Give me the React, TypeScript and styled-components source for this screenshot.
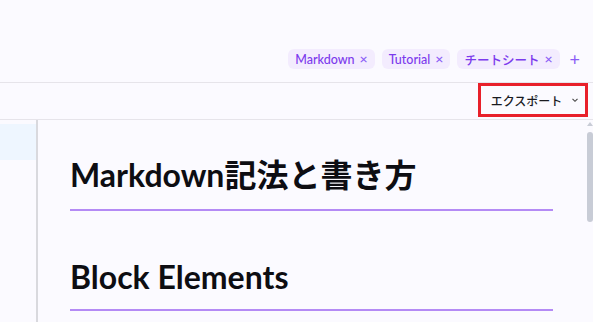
import styled, { createGlobalStyle } from "styled-components";

const GlobalStyle = createGlobalStyle`
  html, body {
    margin: 0;
    padding: 0;
    background: #fbfaff;
    font-family: Lato, "Noto Sans CJK JP", sans-serif;
    overflow: hidden;
  }
`;

const Page = styled.div`
  width: 593px;
  height: 322px;
  display: flex;
  flex-direction: column;
  background: #fbfaff;
`;

const Header = styled.div`
  height: 83px;
  border-bottom: 1px solid #e6e4ea;
  display: flex;
  align-items: flex-end;
  justify-content: flex-end;
  padding: 0 13px 13px 0;
  box-sizing: border-box;
  gap: 7px;
`;

const Tag = styled.span`
  display: inline-flex;
  align-items: center;
  gap: 5px;
  height: 20px;
  padding: 0 7px;
  border-radius: 6px;
  background: #f3ecfe;
  color: #7c3aed;
  font-size: 12.5px;
  font-weight: 500;
`;

const Close = styled.span`
  font-size: 14px;
  line-height: 14px;
  color: #8b5cf6;
`;

const Plus = styled.span`
  color: #8b5cf6;
  font-size: 18px;
  line-height: 20px;
  margin-left: 3px;
`;

const Toolbar = styled.div`
  height: 37px;
  border-bottom: 1px solid #e6e4ea;
  display: flex;
  justify-content: flex-end;
  align-items: flex-start;
  padding-right: 5px;
  box-sizing: border-box;
`;

const ExportButton = styled.button`
  height: 34px;
  width: 110px;
  border: 3px solid #e8202a;
  background: transparent;
  display: flex;
  align-items: center;
  justify-content: center;
  gap: 9px;
  font-family: Lato, "Noto Sans CJK JP", sans-serif;
  font-size: 12px;
  font-weight: 500;
  color: #1a1a1f;
  padding: 0 0 0 4px;
`;

const Body = styled.div`
  flex: 1;
  display: flex;
  min-height: 0;
`;

const Sidebar = styled.div`
  width: 36px;
  border-right: 2px solid #d9d9de;
  padding-top: 4px;
`;

const SideItem = styled.div`
  height: 36px;
  background: #eef6ff;
`;

const Content = styled.div`
  flex: 1;
  display: flex;
  min-width: 0;
`;

const Article = styled.div`
  flex: 1;
  padding: 0 34px 0 32px;
  overflow: hidden;
`;

const Heading = styled.h1`
  margin: 35px 0 0;
  padding-bottom: 14px;
  border-bottom: 2px solid #b48af5;
  font-size: 32px;
  font-weight: 700;
  line-height: 40px;
  color: #0d0d12;
  white-space: nowrap;
`;

const SubHeading = styled(Heading)`
  margin-top: 46px;
  padding-bottom: 12px;
`;

const Scrollbar = styled.div`
  width: 6px;
  display: flex;
  flex-direction: column;
  align-items: center;
  padding-top: 2px;
`;

const Arrow = styled.div`
  width: 0;
  height: 0;
  border-left: 3px solid transparent;
  border-right: 3px solid transparent;
  border-bottom: 4px solid #c8ccd6;
`;

const Thumb = styled.div`
  margin-top: 6px;
  width: 6px;
  height: 90px;
  border-radius: 3px;
  background: #c8ccd6;
`;

const Chevron = () => (
  <svg width="8" height="8" viewBox="0 0 8 8">
    <path d="M1.5 2.8 L4 5.3 L6.5 2.8" fill="none" stroke="#444" strokeWidth="1.1" />
  </svg>
);

const tags = ["Markdown", "Tutorial", "チートシート"];

export default function App() {
  return (
    <Page>
      <GlobalStyle />
      <Header>
        {tags.map((t) => (
          <Tag key={t}>
            {t}
            <Close>×</Close>
          </Tag>
        ))}
        <Plus>+</Plus>
      </Header>
      <Toolbar>
        <ExportButton>
          エクスポート
          <Chevron />
        </ExportButton>
      </Toolbar>
      <Body>
        <Sidebar>
          <SideItem />
        </Sidebar>
        <Content>
          <Article>
            <Heading>Markdown記法と書き方</Heading>
            <SubHeading as="h2">Block Elements</SubHeading>
          </Article>
          <Scrollbar>
            <Arrow />
            <Thumb />
          </Scrollbar>
        </Content>
      </Body>
    </Page>
  );
}
